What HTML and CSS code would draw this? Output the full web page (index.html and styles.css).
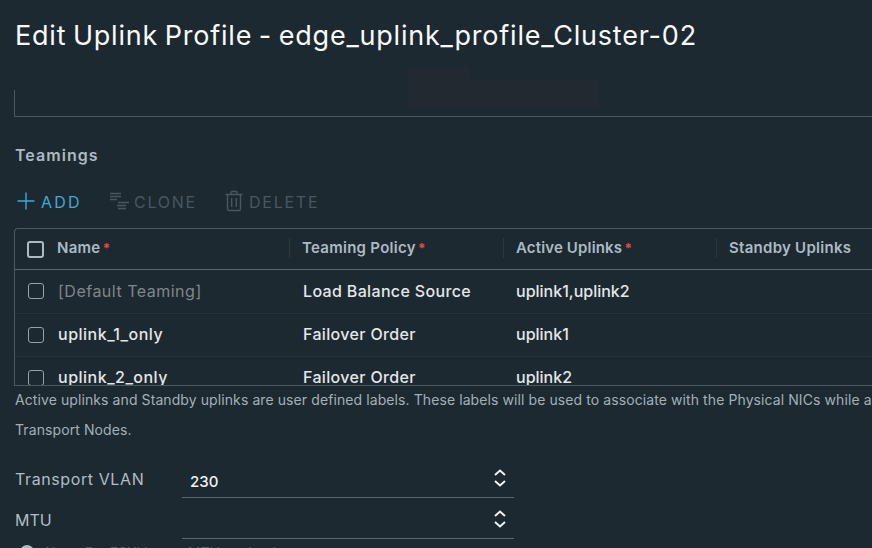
FILE: index.html
```html
<!DOCTYPE html>
<html lang="en">
<head>
<meta charset="utf-8">
<title>Edit Uplink Profile</title>
<link rel="stylesheet" href="styles.css">
</head>
<body>
<main class="dialog">
  <h1 class="title"><span>Edit Uplink Profile - edge_uplink_profile_Cluster-02</span></h1>
  <div class="panel-end"></div>
  <h2 class="section">Teamings</h2>
  <div class="toolbar">
    <button class="action add"><svg width="18" height="18" viewBox="0 0 18 18"><path d="M9 .5v17M.5 9h17"/></svg><span>ADD</span></button>
    <button class="action clone"><svg width="20" height="18" viewBox="0 0 20 18"><path d="M0 1.500h11M0 4.500h11M0 7.500h7M8 10.500h11M7 13.500h9M8 16.500h8"/></svg><span>CLONE</span></button>
    <button class="action delete"><svg width="18" height="22" viewBox="0 0 18 22"><path d="M.5 4.500h17M6 4V2.300Q6 1.500 7 1.500h4q1 0 1 .8V4M2.500 5v14q0 1.500 1.500 1.500h10q1.500 0 1.500-1.500V5M6.700 8v9M11.300 8v9"/></svg><span>DELETE</span></button>
  </div>
  <div class="grid">
    <div class="row head">
      <div class="check"><i class="box"></i></div>
      <div class="cell">Name<b>*</b></div>
      <div class="cell ruled">Teaming Policy<b>*</b></div>
      <div class="cell ruled active-head">Active Uplinks<b>*</b></div>
      <div class="cell ruled">Standby Uplinks</div>
    </div>
    <div class="row">
      <div class="check"><i class="box"></i></div>
      <div class="cell name muted">[Default Teaming]</div>
      <div class="cell policy">Load Balance Source</div>
      <div class="cell active">uplink1,uplink2</div>
      <div class="cell"></div>
    </div>
    <div class="row">
      <div class="check"><i class="box"></i></div>
      <div class="cell name">uplink_1_only</div>
      <div class="cell policy">Failover Order</div>
      <div class="cell active">uplink1</div>
      <div class="cell"></div>
    </div>
    <div class="row">
      <div class="check"><i class="box"></i></div>
      <div class="cell name">uplink_2_only</div>
      <div class="cell policy">Failover Order</div>
      <div class="cell active">uplink2</div>
      <div class="cell"></div>
    </div>
  </div>
  <p class="hint"><span>Active uplinks and Standby uplinks are user defined labels. These labels will be used to associate with the Physical NICs while adding</span><br>Transport Nodes.</p>
  <div class="field">
    <label class="vlan">Transport VLAN</label>
    <div class="input"><span>230</span><svg width="12" height="18" viewBox="0 0 12 18"><path d="M1 6l5-4.500L11 6M1 12l5 4.500L11 12"/></svg></div>
  </div>
  <div class="field mtu">
    <label>MTU</label>
    <div class="input"><span></span><svg width="12" height="18" viewBox="0 0 12 18"><path d="M1 6l5-4.500L11 6M1 12l5 4.500L11 12"/></svg></div>
  </div>
  <div class="note"><i></i><span>Note: For ESXi hosts, MTU setting is</span></div>
</main>
</body>
</html>
```

FILE: styles.css
```css
* { box-sizing: border-box; }
body {
  margin: 0;
  background: #1c2930;
  color: #e3e7e9;
  font-family: Inter, "Open Sans", sans-serif;
}
.dialog {
  height: 548px;
  padding-left: 14px;
  overflow: hidden;
  white-space: nowrap;
}
.title {
  margin: 0;
  height: 68px;
  padding: 20px 0 0 1px;
  font-size: 27px;
  line-height: 32px;
  font-weight: 400;
  letter-spacing: 0.78px;
  word-spacing: -1.7px;
  color: #f8f9f9;
}
.panel-end {
  height: 49px;
  background:
    linear-gradient(#485962, #485962) 0 22px / 1px 27px no-repeat,
    linear-gradient(#485962, #485962) 0 48px / 100% 1px no-repeat,
    linear-gradient(#222930, #222930) 394px 0 / 62px 12px no-repeat,
    linear-gradient(#222930, #222930) 394px 12px / 191px 28px no-repeat;
}
.section {
  margin: 28px 0 0 1px;
  font-size: 16px;
  line-height: 20px;
  font-weight: 600;
  letter-spacing: 1.05px;
  color: #acbac3;
}
.toolbar {
  display: flex;
  height: 63px;
  padding: 22px 0 0 3px;
  align-items: flex-start;
}
.action {
  display: flex;
  align-items: center;
  height: 28px;
  padding: 0;
  border: 0;
  background: none;
  color: #485760;
  font: 400 16px/28px Inter, sans-serif;
  letter-spacing: 1.75px;
}
.action svg { fill: none; stroke: currentColor; stroke-width: 1.4; }
.action span { padding-top: 1px; }
.add { width: 93px; gap: 6px; color: #3fa9d8; letter-spacing: 2.2px; }
.clone { width: 115px; gap: 4px; }
.delete { gap: 6px; }
.grid {
  height: 158px;
  border: 1px solid #485962;
  border-right: 0;
  border-radius: 4px 0 0 0;
  overflow: hidden;
}
.row {
  display: grid;
  grid-template-columns: 43px 231px 214px 213px 1fr;
  height: 43px;
  align-items: center;
  border-bottom: 1px solid #25343c;
  font-size: 16px;
  font-weight: 500;
}
.row.head {
  height: 41px;
  border-color: #566770;
  font-size: 15px;
  font-weight: 600;
  letter-spacing: 0.27px;
  color: #acbac3;
}
.row:nth-child(2) { height: 44px; }
.row:not(.head) { padding-bottom: 2px; }
.check { padding-left: 13px; }
.row:not(.head) .check { padding-top: 1px; }
.head .check { padding-left: 12px; }
.box {
  display: block;
  width: 16px;
  height: 16px;
  border: 1.5px solid #93a3ac;
  border-radius: 3px;
}
.head .box { width: 17px; height: 17px; border: 2px solid #acbac3; }
.cell { line-height: 20px; }
.name { letter-spacing: 0.5px; }
.policy { padding-left: 14px; letter-spacing: 0.34px; }
.active { padding-left: 13px; }
.head .cell { position: relative; top: -1px; left: -1px; }
.head .ruled { left: 0; padding-left: 13px; }
.head .active-head { letter-spacing: 0.15px; }
.ruled { background: linear-gradient(#2a3941, #2a3941) 0 0 / 1px 20px no-repeat; }
.head b { margin-left: 2px; color: #e2453c; font-size: 13px; }
.muted { color: #80868a; font-weight: 400; }
.hint {
  margin: -1px 0 0;
  padding-left: 1px;
  font-size: 14px;
  line-height: 30px;
  letter-spacing: 0.09px;
  color: #a3b0b8;
}
.field {
  display: flex;
  align-items: flex-start;
  height: 41px;
  margin-top: 12px;
  font-size: 16px;
  line-height: 20px;
  color: #b0bdc5;
}
.field.mtu { margin-top: 0; }
.field label { width: 168px; padding: 12px 0 0 1px; }
.field .vlan { letter-spacing: 0.6px; }
.input {
  display: flex;
  justify-content: space-between;
  width: 332px;
  height: 41px;
  padding: 15px 8px 0;
  border-bottom: 1px solid #566770;
  font-size: 15px;
  font-weight: 500;
  color: #f0f2f3;
}
.input svg { margin-top: -3px; fill: none; stroke: #f0f2f3; stroke-width: 2; }
.note {
  display: flex;
  margin-top: 6px;
  font-size: 14px;
  line-height: 16px;
  color: #53616a;
}
.note i { width: 14px; height: 14px; margin: 0 11px 0 6px; border-radius: 50%; background: #acbac3; }
```
